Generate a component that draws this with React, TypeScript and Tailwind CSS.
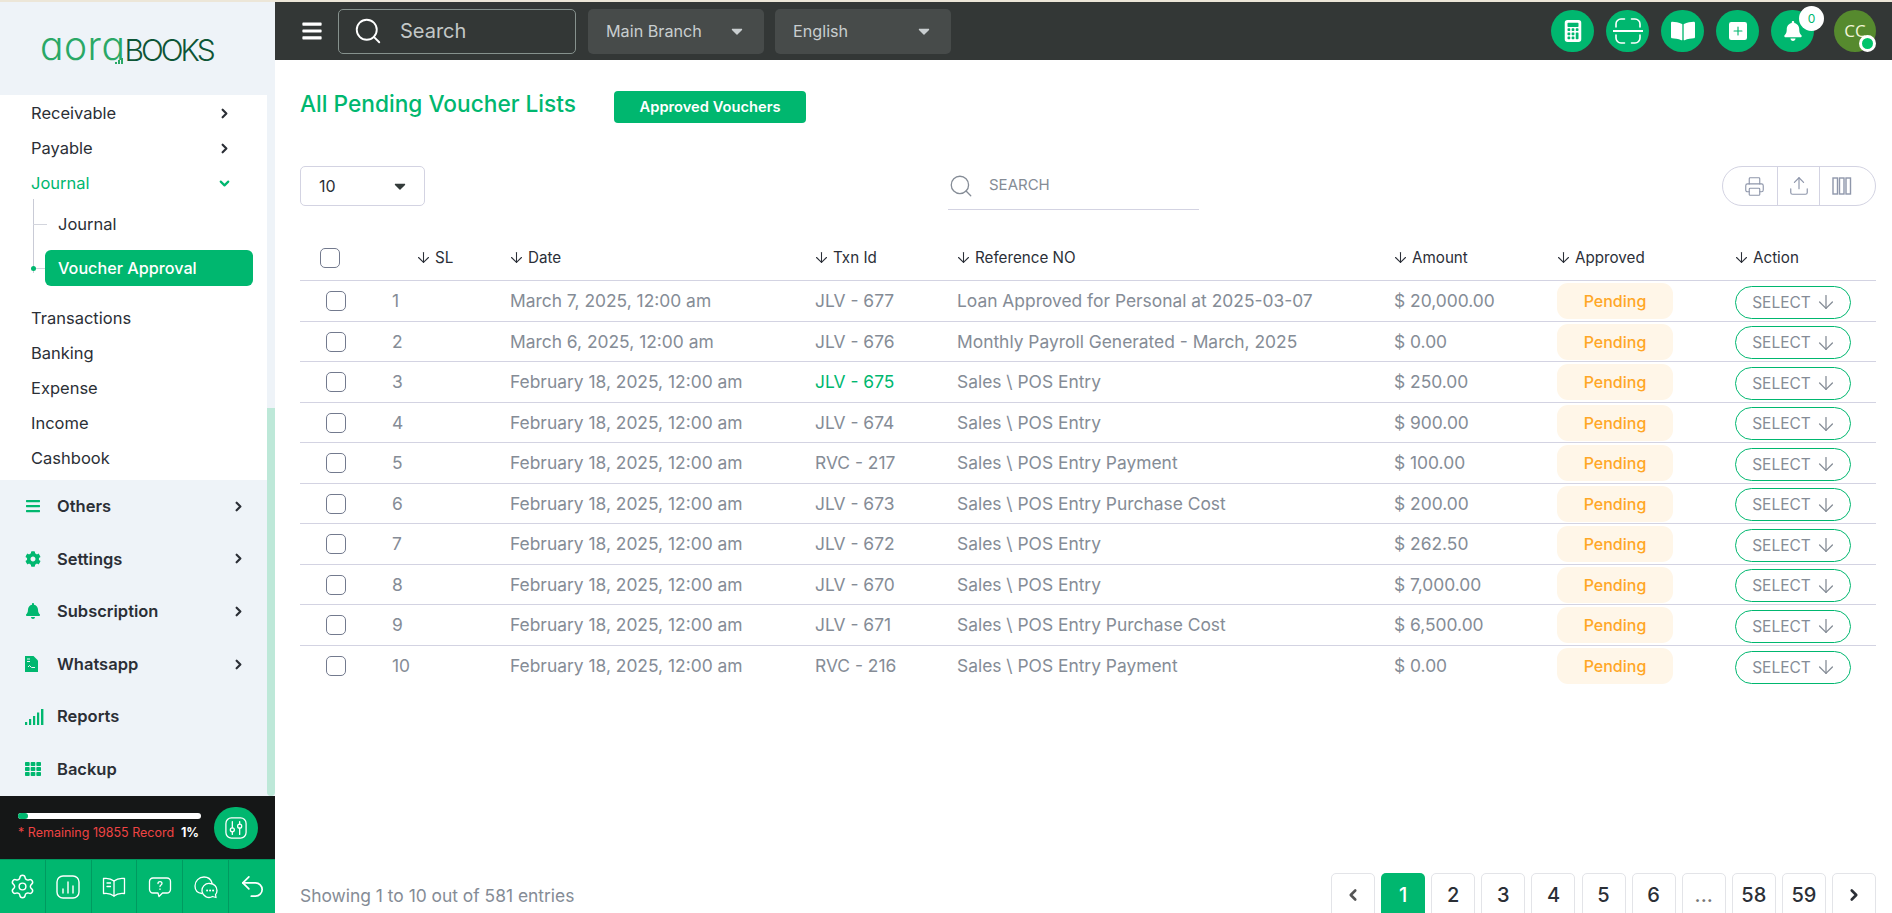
import { ArrowDown, ChevronDown, ChevronLeft, ChevronRight, Printer, Search, Settings, Undo2, Upload } from "lucide-react";
import { BsCalculatorFill, BsFillPlusSquareFill } from "react-icons/bs";
import { FaBars, FaBell, FaBookOpen, FaCaretDown, FaCog, FaTh } from "react-icons/fa";

const rows = [
  ["1", "March 7, 2025, 12:00 am", "JLV - 677", "Loan Approved for Personal at 2025-03-07", "$ 20,000.00"],
  ["2", "March 6, 2025, 12:00 am", "JLV - 676", "Monthly Payroll Generated - March, 2025", "$ 0.00"],
  ["3", "February 18, 2025, 12:00 am", "JLV - 675", "Sales \\ POS Entry", "$ 250.00"],
  ["4", "February 18, 2025, 12:00 am", "JLV - 674", "Sales \\ POS Entry", "$ 900.00"],
  ["5", "February 18, 2025, 12:00 am", "RVC - 217", "Sales \\ POS Entry Payment", "$ 100.00"],
  ["6", "February 18, 2025, 12:00 am", "JLV - 673", "Sales \\ POS Entry Purchase Cost", "$ 200.00"],
  ["7", "February 18, 2025, 12:00 am", "JLV - 672", "Sales \\ POS Entry", "$ 262.50"],
  ["8", "February 18, 2025, 12:00 am", "JLV - 670", "Sales \\ POS Entry", "$ 7,000.00"],
  ["9", "February 18, 2025, 12:00 am", "JLV - 671", "Sales \\ POS Entry Purchase Cost", "$ 6,500.00"],
  ["10", "February 18, 2025, 12:00 am", "RVC - 216", "Sales \\ POS Entry Payment", "$ 0.00"],
];

const gridCols = "grid grid-cols-[92px_118px_305px_142px_437px_163px_178px_141px] items-center";

function ScanIcon() {
  return (
    <svg width="30" height="30" viewBox="0 0 30 30" fill="none" stroke="white" strokeWidth="1.600" strokeLinecap="round" className="shrink-0">
      <path d="M3 11V8a5 5 0 0 1 5-5h3.500" />
      <path d="M18.500 3H22a5 5 0 0 1 5 5v3" />
      <path d="M3 19v3a5 5 0 0 0 5 5h3.500" />
      <path d="M18.500 27H22a5 5 0 0 0 5-5v-3" />
      <path d="M0.500 15h29" strokeWidth="2" />
    </svg>
  );
}

function ReportsIcon() {
  return (
    <svg width="19" height="16" viewBox="0 0 19 16" fill="#00b76f">
      <rect x="0" y="13" width="2.200" height="3" />
      <rect x="4" y="10" width="2.200" height="6" />
      <rect x="8" y="7" width="2.200" height="9" />
      <rect x="12" y="3.500" width="2.200" height="12.500" />
      <rect x="16" y="0" width="2.400" height="16" />
    </svg>
  );
}

function DocIcon() {
  return (
    <svg width="13" height="16" viewBox="0 0 13 16">
      <path d="M0 0h8.500L13 4.500V16H0z" fill="#00b76f" />
      <path d="M2 3h3M2 5.500h3M3 11l1.500-1.500L6.500 11.500H10" stroke="#eef3f8" strokeWidth="1" fill="none" />
    </svg>
  );
}

function ChartBox() {
  return (
    <svg width="24" height="24" viewBox="0 0 24 24" fill="none" stroke="white" strokeWidth="1.400" strokeLinecap="round">
      <rect x="1" y="1" width="22" height="22" rx="6" />
      <path d="M7 18v-4M12 18V7M17 18v-7" />
    </svg>
  );
}

function BookLines() {
  return (
    <svg width="24" height="24" viewBox="0 0 24 24" fill="none" stroke="white" strokeWidth="1.300" strokeLinecap="round" strokeLinejoin="round">
      <path d="M12 6C9 3.500 5 3 1.500 3.500v15C5 18 9 18.500 12 21c3-2.500 7-3 10.500-2.500v-15C19 3 15 3.500 12 6z" />
      <path d="M12 6v15M5 8h3.500M5 11.500h3.500" />
    </svg>
  );
}

function QuestionChat() {
  return (
    <svg width="24" height="24" viewBox="0 0 24 24" fill="none" stroke="white" strokeWidth="1.300" strokeLinejoin="round">
      <path d="M5 3h14a3.500 3.500 0 0 1 3.500 3.500v8A3.500 3.500 0 0 1 19 18h-4.500L11 21.500 10 18H5a3.500 3.500 0 0 1-3.500-3.500v-8A3.500 3.500 0 0 1 5 3z" />
      <path d="M10 8.500c0-2.500 4-2.500 4 0 0 1.500-2 1.500-2 3" strokeLinecap="round" />
      <path d="M12 14v.4" strokeLinecap="round" />
    </svg>
  );
}

function TwoChats() {
  return (
    <svg width="24" height="24" viewBox="0 0 24 24" fill="none" stroke="white" strokeWidth="1.300" strokeLinecap="round" strokeLinejoin="round">
      <path d="M8 18.500C3.500 18 1 15 1 11 1 6 5 2 10 2c4 0 7 2.500 8 6" />
      <path d="M16 8.500a7 7 0 0 1 7 7c0 1.500-.5 3-1.500 4l.5 3-3.500-1a7 7 0 1 1-2.500-13z" />
      <path d="M13 15.500h.2M16 15.500h.2M19 15.500h.2" strokeWidth="1.800" />
    </svg>
  );
}

function SlidersBox() {
  return (
    <svg width="22" height="22" viewBox="0 0 24 24" fill="none" stroke="white" strokeWidth="1.400" strokeLinecap="round">
      <rect x="1" y="1" width="22" height="22" rx="6" />
      <circle cx="8" cy="14" r="2.200" />
      <circle cx="16" cy="10" r="2.200" />
      <path d="M8 5v6.800M8 16.200V19M16 5v2.800M16 12.200V19" />
    </svg>
  );
}

function ColumnsIcon() {
  return (
    <svg width="20" height="18" viewBox="0 0 20 18" fill="none" stroke="#8f97ab" strokeWidth="1.400">
      <rect x="1" y="1" width="4.500" height="16" />
      <rect x="7.500" y="1" width="4.500" height="16" />
      <rect x="14" y="1" width="4.500" height="16" />
    </svg>
  );
}

function Logo() {
  return (
    <div className="flex items-end h-[30px] font-['Inter',sans-serif] leading-none">
      <span className="text-[39px] font-light tracking-[0.5px] text-[#2aa866] [font-feature-settings:'cv11']">aora</span>
      <span className="relative text-[30px] font-light tracking-[-3px] text-[#0d5536] ml-[-1px]">
        <svg width="10" height="8" viewBox="0 0 10 8" fill="#2aa866" className="absolute left-[-9px] bottom-[1px]">
          <rect x="0" y="6" width="2" height="2" />
          <rect x="3" y="4" width="2" height="4" />
          <rect x="6" y="2" width="2" height="6" />
        </svg>
        BOOKS
      </span>
    </div>
  );
}

function HeaderCircle({ children, badge }: { children: React.ReactNode; badge?: boolean }) {
  return (
    <div className="relative flex items-center justify-center w-[43px] h-[42px] rounded-full bg-[#00b76f] text-white">
      {children}
      {badge && (
        <span className="absolute -top-[4px] right-[-10px] flex items-center justify-center w-[25px] h-[25px] rounded-full bg-white text-[12px] text-[#00b76f]">0</span>
      )}
    </div>
  );
}

function SubItem({ label, open, active }: { label: string; open?: boolean; active?: boolean }) {
  return (
    <div className={`flex items-center justify-between h-[35px] pl-[31px] pr-[35px] text-[16.500px] ${active ? "text-[#00b76f]" : "text-[#2b2f36]"}`}>
      <span>{label}</span>
      {open !== undefined &&
        (open ? (
          <ChevronDown size={15} strokeWidth={3.500} className="text-[#00b76f]" />
        ) : (
          <ChevronRight size={15} strokeWidth={3.500} className="text-[#2b2f36]" />
        ))}
    </div>
  );
}

function SideSection({ icon, label, arrow }: { icon: React.ReactNode; label: string; arrow?: boolean }) {
  return (
    <div className="flex items-center h-[52.600px] pl-[25px] pr-[21px] text-[16.500px] font-semibold text-[#2b2f36]">
      <span className="flex items-center w-[32px] text-[#00b76f]">{icon}</span>
      <span className="flex-1">{label}</span>
      {arrow && <ChevronRight size={15} strokeWidth={3.500} />}
    </div>
  );
}

function Sidebar() {
  return (
    <aside className="flex flex-col w-[275px] shrink-0 bg-[#eef3f8]">
      <div className="flex items-start h-[93px] pl-[40px] pt-[33px]">
        <Logo />
      </div>
      <div className="flex flex-1 min-h-0">
        <div className="flex-1 min-w-0">
          <div className="h-[385px] bg-white pt-[0.800px]">
            <SubItem label="Receivable" open={false} />
            <SubItem label="Payable" open={false} />
            <SubItem label="Journal" open active />
            <div className="relative pl-[45px] pr-[14px] pb-[14.500px] pt-[2.500px] text-[16.500px]">
              <div className="absolute left-[33px] top-[-2px] h-[74px] w-px bg-[#c9cbd6]" />
              <div className="absolute left-[33px] top-[23px] h-px w-[14px] bg-[#d3d5dd]" />
              <div className="absolute left-[33px] top-[67px] h-px w-[12px] bg-[#d3d5dd]" />
              <div className="absolute left-[31px] top-[65px] h-[5px] w-[5px] rounded-full bg-[#00b76f]" />
              <div className="flex items-center h-[42px] pl-[13px] text-[#2b2f36]">Journal</div>
              <div className="flex items-center h-[36px] mt-[4.500px] mb-[1px] pl-[13px] rounded-md bg-[#00b76f] text-[16.200px] text-white font-medium">Voucher Approval</div>
            </div>
            <SubItem label="Transactions" />
            <SubItem label="Banking" />
            <SubItem label="Expense" />
            <SubItem label="Income" />
            <SubItem label="Cashbook" />
          </div>
          <SideSection icon={<FaBars size={16} />} label="Others" arrow />
          <SideSection icon={<FaCog size={16} />} label="Settings" arrow />
          <SideSection icon={<FaBell size={16} />} label="Subscription" arrow />
          <SideSection icon={<DocIcon />} label="Whatsapp" arrow />
          <SideSection icon={<ReportsIcon />} label="Reports" />
          <SideSection icon={<FaTh size={16} />} label="Backup" />
        </div>
        <div className="w-[8px] pt-[313px]">
          <div className="h-full rounded-b bg-[#bde8d8]" />
        </div>
      </div>
      <div className="flex items-center h-[63px] pl-[18px] pr-[17px] bg-[#151717]">
        <div className="w-[183px]">
          <div className="h-[6px] w-full rounded-full bg-white">
            <div className="h-full w-[10px] rounded-full bg-[#00b76f]" />
          </div>
          <div className="flex justify-between mt-[5px] pr-[2px] text-[12.500px] whitespace-nowrap">
            <span className="text-[#ef4444]">* Remaining 19855 Record</span>
            <span className="font-bold text-white">1%</span>
          </div>
        </div>
        <div className="flex items-center justify-center ml-auto w-[44px] h-[42px] rounded-full bg-[#00b76f]">
          <SlidersBox />
        </div>
      </div>
      <div className="grid grid-cols-6 h-[54px] border-t border-[#009a60] bg-[#00b76f] text-white divide-x divide-[#009a60]">
        <div className="flex items-center justify-center"><Settings size={27} strokeWidth={1.300} /></div>
        <div className="flex items-center justify-center"><ChartBox /></div>
        <div className="flex items-center justify-center"><BookLines /></div>
        <div className="flex items-center justify-center"><QuestionChat /></div>
        <div className="flex items-center justify-center"><TwoChats /></div>
        <div className="flex items-center justify-center"><Undo2 size={29} strokeWidth={1.400} /></div>
      </div>
    </aside>
  );
}

function Topbar() {
  return (
    <header className="flex items-center h-[58px] pl-[26px] pr-[16px] bg-[#333736] shrink-0">
      <FaBars size={22} className="text-white" />
      <div className="flex items-center w-[238px] h-[45px] ml-[15px] pl-[14px] rounded-[5px] border border-[#86918d]">
        <Search size={30} strokeWidth={1.500} className="text-white" />
        <span className="ml-[17px] text-[20px] text-[#c3c8c7]">Search</span>
      </div>
      <div className="flex items-center justify-between w-[176px] h-[45px] ml-[12px] px-[18px] rounded-[5px] bg-[#474b4a] text-[16.200px] text-[#c9ced0]">
        <span>Main Branch</span>
        <FaCaretDown size={18} className="text-[#c9ced0]" />
      </div>
      <div className="flex items-center justify-between w-[176px] h-[45px] ml-[11px] px-[18px] rounded-[5px] bg-[#474b4a] text-[16.200px] text-[#c9ced0]">
        <span>English</span>
        <FaCaretDown size={18} className="text-[#c9ced0]" />
      </div>
      <div className="flex items-center gap-[12px] ml-auto">
        <HeaderCircle><BsCalculatorFill size={22} /></HeaderCircle>
        <HeaderCircle><ScanIcon /></HeaderCircle>
        <HeaderCircle><FaBookOpen size={24} /></HeaderCircle>
        <HeaderCircle><BsFillPlusSquareFill size={18} /></HeaderCircle>
        <HeaderCircle badge><FaBell size={20} /></HeaderCircle>
        <div className="relative flex items-center justify-center ml-[8px] w-[42px] h-[42px] rounded-full bg-[#568a2e] text-[17px] text-[#f3f5d8] font-['Open_Sans',sans-serif]">
          CC
          <span className="absolute right-0 bottom-0 w-[17px] h-[17px] rounded-full border-[3px] border-white bg-[#00c46a]" />
        </div>
      </div>
    </header>
  );
}

function Th({ label }: { label: string }) {
  return (
    <div className="flex items-center gap-[3px] -ml-[2px] text-[15.200px] text-[#2b2f38]">
      <ArrowDown size={17} strokeWidth={1.500} />
      {label}
    </div>
  );
}

function Checkbox({ className }: { className: string }) {
  return <div className={`w-[20px] h-[20px] rounded-[5px] border border-[#737a8e] ${className}`} />;
}

function VoucherTable() {
  return (
    <div className="mt-[4px]">
      <div className={`${gridCols} h-[71px] pt-[26px] border-b border-[#d3d3e2]`}>
        <div><Checkbox className="ml-[20px]" /></div>
        <div className="pl-[25px]"><Th label="SL" /></div>
        <Th label="Date" />
        <Th label="Txn Id" />
        <Th label="Reference NO" />
        <Th label="Amount" />
        <Th label="Approved" />
        <Th label="Action" />
      </div>
      {rows.map((r, idx) => (
        <div key={r[0]} className={`${gridCols} h-[40.500px] pt-[1px] text-[17.400px] text-[#858c96] ${idx < rows.length - 1 ? "border-b border-[#d3d3e2]" : ""}`}>
          <div><Checkbox className="ml-[26px]" /></div>
          <div>{r[0]}</div>
          <div>{r[1]}</div>
          <div className={idx === 2 ? "text-[#00b76f]" : ""}>{r[2]}</div>
          <div>{r[3]}</div>
          <div>{r[4]}</div>
          <div className="flex items-center justify-center w-[116px] h-[36px] rounded-[11px] bg-[#fff6e8] text-[16px] font-medium text-[#ffa726]">Pending</div>
          <div className="flex items-center justify-center gap-[4px] w-[116px] h-[33px] mt-[2px] pl-[3px] rounded-full border border-[#00b76f] text-[15.500px]">
            SELECT
            <ArrowDown size={22} strokeWidth={1.400} />
          </div>
        </div>
      ))}
    </div>
  );
}

function Pagination() {
  const btn = "flex items-center justify-center w-[44px] h-[44px] rounded-t-[5px] border border-[#e3e4e8] text-[20px] font-medium text-[#2b2f36]";
  return (
    <div className="flex gap-[6.100px]">
      <div className={btn}><ChevronLeft size={18} strokeWidth={3.500} className="text-[#555]" /></div>
      <div className="flex items-center justify-center w-[44px] h-[44px] rounded-t-[5px] bg-[#00b76f] text-[20px] font-medium text-white">1</div>
      {["2", "3", "4", "5", "6"].map((n) => (
        <div key={n} className={btn}>{n}</div>
      ))}
      <div className={`${btn} text-[#777]`}>...</div>
      <div className={btn}>58</div>
      <div className={btn}>59</div>
      <div className={btn}><ChevronRight size={18} strokeWidth={3.500} /></div>
    </div>
  );
}

export default function App() {
  return (
    <div className="flex flex-col h-[913px] overflow-hidden bg-white font-['Inter',sans-serif]">
      <div className="h-[2px] shrink-0 bg-[#ece6d8]" />
      <div className="flex flex-1 min-h-0">
        <Sidebar />
        <div className="flex flex-col flex-1 min-w-0">
          <Topbar />
          <main className="flex-1 min-h-0 pl-[25px] pr-[16px]">
            <div className="flex items-center h-[32px] mt-[31px]">
              <h1 className="pb-[5px] text-[22.700px] font-medium text-[#00b76f]">All Pending Voucher Lists</h1>
              <button className="flex items-center justify-center w-[192px] h-[32px] ml-[38px] rounded-[4px] bg-[#00b76f] text-[14.700px] font-semibold text-white">Approved Vouchers</button>
            </div>
            <div className="flex items-center justify-between mt-[43px] h-[40px]">
              <div className="flex items-center justify-between w-[125px] h-[40px] pl-[18px] pr-[15px] rounded-[5px] border border-[#d3d3e2] text-[16px] text-[#2b2f36]">
                10
                <FaCaretDown size={18} className="text-[#333b3a]" />
              </div>
              <div className="flex items-center w-[251px] h-[48px] border-b border-[#d3d3e2]">
                <Search size={26} strokeWidth={1.200} className="text-[#858c96]" />
                <span className="ml-[15px] text-[15px] text-[#858c96]">SEARCH</span>
              </div>
              <div className="flex items-center h-[40px] w-[154px] rounded-full border border-[#d3d3e2] text-[#8f97ab]">
                <div className="flex items-center justify-end w-[55px] h-full pr-[12px] border-r border-[#d3d3e2]"><Printer size={21} strokeWidth={1.300} /></div>
                <div className="flex items-center justify-center w-[42px] h-full border-r border-[#d3d3e2]"><Upload size={22} strokeWidth={1.300} /></div>
                <div className="flex items-center pl-[12px]"><ColumnsIcon /></div>
              </div>
            </div>
            <VoucherTable />
            <div className="flex items-start justify-between mt-[187px]">
              <span className="mt-[10px] text-[17.400px] text-[#858c96]">Showing 1 to 10 out of 581 entries</span>
              <Pagination />
            </div>
          </main>
        </div>
      </div>
    </div>
  );
}
